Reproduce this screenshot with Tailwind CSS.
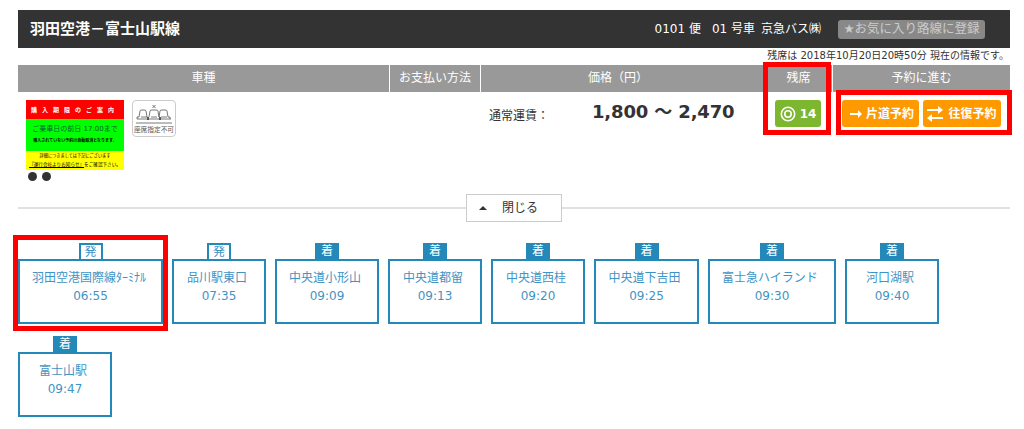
<!DOCTYPE html>
<html lang="ja">
<head>
  <meta charset="UTF-8" />
  <title>羽田空港-富士山駅線</title>
  <script src="https://cdn.jsdelivr.net/npm/@tailwindcss/browser@4"></script>
</head>
<body class="relative h-[429px] w-[1024px] overflow-hidden bg-white font-['DejaVu_Sans','Noto_Sans_CJK_JP',sans-serif] text-[#333]">

  <div class="pl-[18px] pr-[14px] pt-[10px]">
    <!-- Title bar -->
    <header class="flex h-[38px] items-center bg-[#333] pl-[12px] text-white">
      <h1 class="text-[15px] font-bold">羽田空港－富士山駅線</h1>
      <div class="ml-auto flex items-center text-[12px]">
        <span>0101 便</span>
        <span class="ml-[11px]">01 号車</span>
        <span class="ml-[6px]">京急バス㈱</span>
        <span class="ml-[17px] mr-[25px] flex h-[19px] w-[147px] items-center justify-center whitespace-nowrap rounded-[3px] bg-[#888] text-[12.5px] text-[#ccc]">★お気に入り路線に登録</span>
      </div>
    </header>
    <p class="mr-[1px] h-[17px] whitespace-nowrap text-right text-[10px] leading-[16px]">残席は 2018年10月20日20時50分 現在の情報です。</p>

    <!-- Table head -->
    <div class="grid h-[27px] grid-cols-[371px_90px_283px_67px_177px] gap-x-[1px] text-center text-[12px] leading-[27px] text-white">
      <div class="bg-[#999]">車種</div>
      <div class="bg-[#999]">お支払い方法</div>
      <div class="bg-[#999] pr-[9px]">価格（円）</div>
      <div class="bg-[#999]">残席</div>
      <div class="bg-[#999]">予約に進む</div>
    </div>

    <!-- Table row -->
    <div class="flex h-[102px] pt-[8px]">
      <div class="w-[471px] pl-[8px]">
        <div class="flex gap-[8px]">
          <div class="h-[70px] w-[98px] overflow-hidden text-center">
            <div class="h-[19px] whitespace-nowrap bg-[#f00] text-[6px] font-bold leading-[19px] tracking-[5px] text-white">購入期限のご案内</div>
            <div class="h-[32px] bg-[#0f0] text-[#063]">
              <div class="whitespace-nowrap pt-[5px] text-[7px] leading-[11px]">ご乗車日の前日 17:00まで</div>
              <div class="whitespace-nowrap text-[4px] font-bold leading-[11px] text-black">購入されていない予約は自動取消となります。</div>
            </div>
            <div class="h-[19px] whitespace-nowrap bg-[#ff0] text-black">
              <div class="pt-[1px] text-[4.2px] leading-[8px]">詳細につきましては下記にございます</div>
              <div class="text-[4.6px] leading-[9px]"><span class="underline">『運行会社よりお知らせ』</span>をご確認下さい。</div>
            </div>
          </div>
          <div class="flex h-[37px] w-[44px] flex-col items-center rounded-[4px] border border-[#ccc]">
            <svg class="mt-[2px]" width="40" height="22" viewBox="0 0 40 22" fill="none" stroke="#555" stroke-width="0.8">
              <path d="M18.5 2l3 3m0-3l-3 3" />
              <path d="M2 20h36M3 16v-2h2l1-6q0-1 2-1h2q2 0 2 1l1 6M15 14l1-6q0-1 2-1h4q2 0 2 1l1 6M25 14l1-6q0-1 2-1h3q2 0 2 1l1 6h2v2" />
              <path d="M3 16h34M7 14h6M17 14h6M27 14h6" />
              <path d="M14 14v3M26 14v3" stroke-width="2" />
            </svg>
            <span class="whitespace-nowrap text-[6.7px] leading-[11px] text-[#555]">座席指定不可</span>
          </div>
        </div>
        <div class="ml-[2px] mt-[2px] flex gap-[5px]">
          <span class="h-[9px] w-[9px] rounded-full bg-[#333]"></span>
          <span class="h-[9px] w-[9px] rounded-full bg-[#333]"></span>
        </div>
      </div>
      <div class="flex h-[27px] w-[286px] items-center">
        <span class="w-[103px] pt-[4px] text-[12px]">通常運賃：</span>
        <span class="whitespace-nowrap pb-[5px] text-[18px] font-bold tracking-[-0.15px]">1,800 〜 2,470</span>
      </div>
      <div class="w-[67px]">
        <div class="flex h-[27px] w-[46px] items-center justify-center gap-[4px] rounded-[3px] bg-[#7db62f] text-[12px] font-bold text-white">
          <svg width="16" height="16" viewBox="0 0 16 16" fill="none" stroke="#fff"><circle cx="8" cy="8" r="6.7" stroke-width="1.6" /><circle cx="8" cy="8" r="3.2" stroke-width="1.6" /></svg>
          <span>14</span>
        </div>
      </div>
      <div class="flex gap-[4px] text-[12px] font-bold text-white">
        <div class="flex h-[27px] w-[77px] items-center justify-center gap-[4px] rounded-[3px] bg-[#f90] pl-[3px]">
          <svg width="12" height="8" viewBox="0 0 12 8" fill="#fff"><path d="M0 3h8V0l4 4-4 4V5H0z" /></svg>
          <span class="whitespace-nowrap">片道予約</span>
        </div>
        <div class="flex h-[27px] w-[78px] items-center justify-center gap-[5px] rounded-[3px] bg-[#f90]">
          <svg width="16" height="16" viewBox="0 0 16 16" fill="#fff"><path d="M0 3h11V0l5 4-5 4V5H0zM16 11H5V8l-5 4 5 4v-3h11z" /></svg>
          <span class="whitespace-nowrap">往復予約</span>
        </div>
      </div>
    </div>

    <!-- Close divider -->
    <div class="flex h-[28px] items-center">
      <div class="h-[2px] flex-1 bg-[#e0e0e0]"></div>
      <div class="flex h-[28px] w-[96px] items-center border border-[#ccc] bg-white pl-[12px] text-[12px]">
        <svg width="8" height="4" viewBox="0 0 8 4" fill="#333"><path d="M4 0l4 4H0z" /></svg>
        <span class="ml-[15px]">閉じる</span>
      </div>
      <div class="h-[2px] flex-1 bg-[#e0e0e0]"></div>
    </div>

    <!-- Stops -->
    <div class="mt-[21px] flex flex-wrap gap-x-[9px] gap-y-[12px] text-center text-[12px] leading-[18px] text-[#3f94c4]">
      <div class="flex w-[145px] flex-col items-center">
        <span class="h-[16px] w-[24px] border-2 border-b-0 border-[#2488b8] bg-white text-[12px] leading-[14px]">発</span>
        <div class="h-[65px] w-full whitespace-nowrap border-2 border-[#2488b8] pt-[8px]"><p class="pr-[3px]">羽田空港国際線ﾀｰﾐﾅﾙ</p><p>06:55</p></div>
      </div>
      <div class="flex w-[94px] flex-col items-center">
        <span class="h-[16px] w-[24px] border-2 border-b-0 border-[#2488b8] bg-white text-[12px] leading-[14px]">発</span>
        <div class="h-[65px] w-full whitespace-nowrap border-2 border-[#2488b8] pt-[8px]"><p class="pr-[4px]">品川駅東口</p><p>07:35</p></div>
      </div>
      <div class="flex w-[104px] flex-col items-center">
        <span class="h-[16px] w-[24px] bg-[#2488b8] text-[12px] leading-[16px] text-white">着</span>
        <div class="h-[65px] w-full whitespace-nowrap border-2 border-[#2488b8] pt-[8px]"><p class="pr-[4px]">中央道小形山</p><p>09:09</p></div>
      </div>
      <div class="flex w-[94px] flex-col items-center">
        <span class="h-[16px] w-[24px] bg-[#2488b8] text-[12px] leading-[16px] text-white">着</span>
        <div class="h-[65px] w-full whitespace-nowrap border-2 border-[#2488b8] pt-[8px]"><p class="pr-[4px]">中央道都留</p><p>09:13</p></div>
      </div>
      <div class="flex w-[94px] flex-col items-center">
        <span class="h-[16px] w-[24px] bg-[#2488b8] text-[12px] leading-[16px] text-white">着</span>
        <div class="h-[65px] w-full whitespace-nowrap border-2 border-[#2488b8] pt-[8px]"><p class="pr-[4px]">中央道西桂</p><p>09:20</p></div>
      </div>
      <div class="flex w-[105px] flex-col items-center">
        <span class="h-[16px] w-[24px] bg-[#2488b8] text-[12px] leading-[16px] text-white">着</span>
        <div class="h-[65px] w-full whitespace-nowrap border-2 border-[#2488b8] pt-[8px]"><p class="pr-[4px]">中央道下吉田</p><p>09:25</p></div>
      </div>
      <div class="flex w-[128px] flex-col items-center">
        <span class="h-[16px] w-[24px] bg-[#2488b8] text-[12px] leading-[16px] text-white">着</span>
        <div class="h-[65px] w-full whitespace-nowrap border-2 border-[#2488b8] pt-[8px]"><p class="pr-[4px]">富士急ハイランド</p><p>09:30</p></div>
      </div>
      <div class="flex w-[94px] flex-col items-center">
        <span class="h-[16px] w-[24px] bg-[#2488b8] text-[12px] leading-[16px] text-white">着</span>
        <div class="h-[65px] w-full whitespace-nowrap border-2 border-[#2488b8] pt-[8px]"><p class="pr-[4px]">河口湖駅</p><p>09:40</p></div>
      </div>
      <div class="flex w-[94px] flex-col items-center">
        <span class="h-[16px] w-[24px] bg-[#2488b8] text-[12px] leading-[16px] text-white">着</span>
        <div class="h-[65px] w-full whitespace-nowrap border-2 border-[#2488b8] pt-[8px]"><p class="pr-[4px]">富士山駅</p><p>09:47</p></div>
      </div>
    </div>
  </div>

  <!-- Red annotation boxes -->
  <div class="absolute left-[763px] top-[62px] h-[73px] w-[68px] border-[5px] border-[#f00]"></div>
  <div class="absolute left-[836px] top-[90px] h-[45px] w-[176px] border-[5px] border-[#f00]"></div>
  <div class="absolute left-[13px] top-[235px] h-[96px] w-[155px] border-[5px] border-[#f00]"></div>
</body>
</html>
